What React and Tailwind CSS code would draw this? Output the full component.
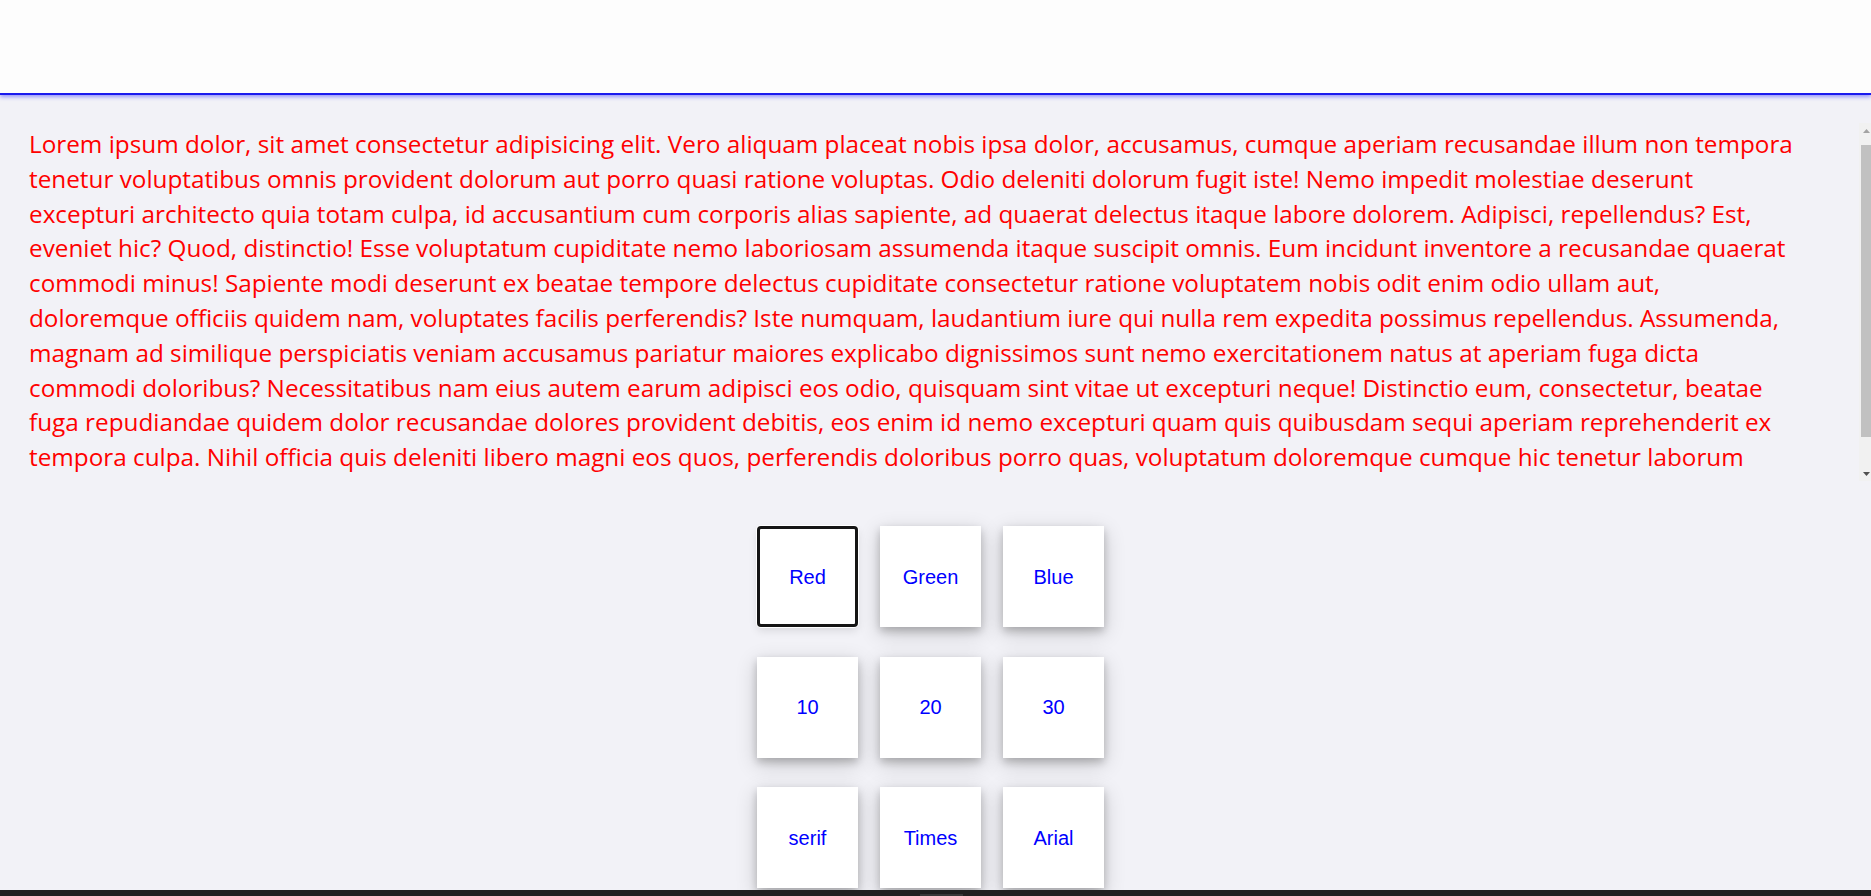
import React from "react";

const LINES = [
  "Lorem ipsum dolor, sit amet consectetur adipisicing elit. Vero aliquam placeat nobis ipsa dolor, accusamus, cumque aperiam recusandae illum non tempora",
  "tenetur voluptatibus omnis provident dolorum aut porro quasi ratione voluptas. Odio deleniti dolorum fugit iste! Nemo impedit molestiae deserunt",
  "excepturi architecto quia totam culpa, id accusantium cum corporis alias sapiente, ad quaerat delectus itaque labore dolorem. Adipisci, repellendus? Est,",
  "eveniet hic? Quod, distinctio! Esse voluptatum cupiditate nemo laboriosam assumenda itaque suscipit omnis. Eum incidunt inventore a recusandae quaerat",
  "commodi minus! Sapiente modi deserunt ex beatae tempore delectus cupiditate consectetur ratione voluptatem nobis odit enim odio ullam aut,",
  "doloremque officiis quidem nam, voluptates facilis perferendis? Iste numquam, laudantium iure qui nulla rem expedita possimus repellendus. Assumenda,",
  "magnam ad similique perspiciatis veniam accusamus pariatur maiores explicabo dignissimos sunt nemo exercitationem natus at aperiam fuga dicta",
  "commodi doloribus? Necessitatibus nam eius autem earum adipisci eos odio, quisquam sint vitae ut excepturi neque! Distinctio eum, consectetur, beatae",
  "fuga repudiandae quidem dolor recusandae dolores provident debitis, eos enim id nemo excepturi quam quis quibusdam sequi aperiam reprehenderit ex",
  "tempora culpa. Nihil officia quis deleniti libero magni eos quos, perferendis doloribus porro quas, voluptatum doloremque cumque hic tenetur laborum",
];

const BUTTONS = ["Red", "Green", "Blue", "10", "20", "30", "serif", "Times", "Arial"];

function Scrollbar() {
  return (
    <div className="w-[15px] shrink-0 flex flex-col bg-[#f1f1f1]">
      <div className="h-[15px] flex items-center justify-center">
        <svg width="7" height="4" viewBox="0 0 7 4">
          <path d="M3.5 0 L7 4 L0 4 Z" fill="#a3a3a3" />
        </svg>
      </div>
      <div className="flex-1 px-[2px] pt-[7px]">
        <div className="h-[292px] bg-[#c1c1c1]" />
      </div>
      <div className="h-[15px] flex items-center justify-center">
        <svg width="7" height="4" viewBox="0 0 7 4">
          <path d="M0 0 L7 0 L3.5 4 Z" fill="#505050" />
        </svg>
      </div>
    </div>
  );
}

export default function App() {
  return (
    <div className="w-full h-[896px] flex flex-col bg-[#f2f2f7] overflow-hidden">
      <header className="relative z-10 h-[95px] shrink-0 bg-[#fdfdfd] border-b-2 border-[#1a1aee] shadow-[0_2px_4px_rgba(40,40,255,0.45)]" />

      <div className="pt-[28px] shrink-0">
        <div className="w-[calc(100%+3px)] h-[358px] flex">
          <div className="flex-1 overflow-hidden pl-[29px] pt-[4px] text-[#ff0000] text-[24.3px] leading-[34.8px] font-['Open_Sans',sans-serif]">
            {LINES.map((l, i) => (
              <div key={i} className="whitespace-nowrap">
                {l}
              </div>
            ))}
          </div>
          <Scrollbar />
        </div>
      </div>

      <div className="mt-[45px] flex justify-center pr-[10px] shrink-0">
        <div className="grid grid-cols-[101px_101px_101px] auto-rows-[101px] gap-x-[22px] gap-y-[29.5px]">
          {BUTTONS.map((b, i) => (
            <button
              key={b}
              className={
                i === 0
                  ? "flex items-center justify-center bg-white text-[#0000ff] text-[20px] font-['Liberation_Sans',Arial,sans-serif] rounded-[4px] outline-[3px] outline-solid outline-[#151515] outline-offset-[-3px] shadow-[0_0_0_1px_#ffffff,0_4px_8px_rgba(0,0,0,0.1)]"
                  : "flex items-center justify-center bg-white text-[#0000ff] text-[20px] font-['Liberation_Sans',Arial,sans-serif] shadow-[0_4px_8px_0_rgba(0,0,0,0.2),0_6px_20px_0_rgba(0,0,0,0.19)]"
              }
            >
              {b}
            </button>
          ))}
        </div>
      </div>

      <div className="mt-auto h-[6px] shrink-0 bg-[#202020] relative z-10">
        <div className="ml-[920px] mt-[4px] w-[43px] h-[2px] bg-[#383838]" />
      </div>
    </div>
  );
}
